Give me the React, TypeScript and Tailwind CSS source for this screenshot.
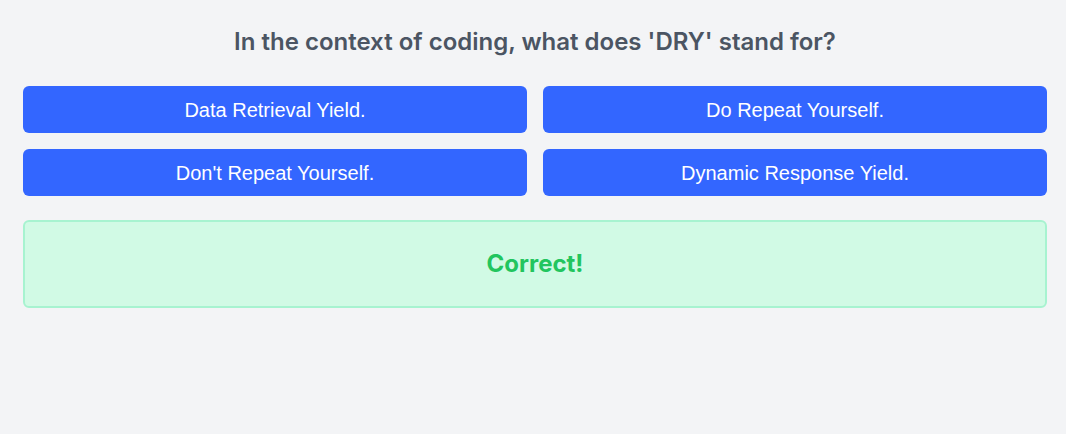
export default function App() {
  const options = [
    "Data Retrieval Yield.",
    "Do Repeat Yourself.",
    "Don't Repeat Yourself.",
    "Dynamic Response Yield.",
  ];

  return (
    <div className="min-h-[434px] bg-[#f3f4f6] pt-[26px]">
      <div className="ml-[23px] w-[1024px]">
        <h2 className="text-center text-2xl leading-[32px] font-semibold text-[#4b5563] font-['Inter',sans-serif]">
          In the context of coding, what does 'DRY' stand for?
        </h2>

        <div className="mt-[28px] grid grid-cols-2 gap-4">
          {options.map((o) => (
            <button
              key={o}
              className="h-[47px] rounded-md bg-[#3366ff] text-white text-xl font-['Liberation_Sans',Arial,sans-serif]"
            >
              {o}
            </button>
          ))}
        </div>

        <div className="mt-6 h-[88px] flex items-center justify-center rounded-md border-2 border-[#a7f3d0] bg-[#d1fae5]">
          <span className="text-2xl font-bold text-[#22c55e] font-['Inter',sans-serif]">Correct!</span>
        </div>
      </div>
    </div>
  );
}
